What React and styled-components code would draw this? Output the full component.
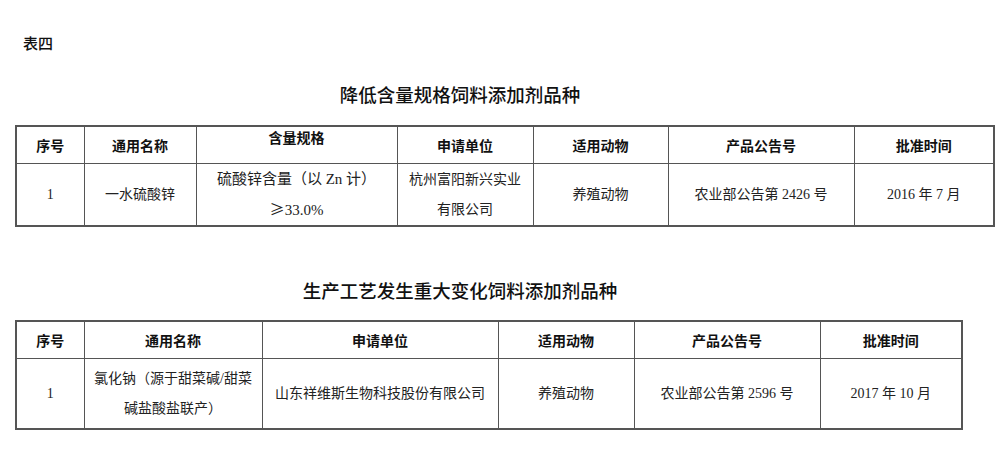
import React from 'react';
import styled, { createGlobalStyle } from 'styled-components';

const GlobalStyle = createGlobalStyle`
  html, body {
    margin: 0;
    background: #fff;
  }
  body {
    font-family: "Liberation Serif", "Noto Sans CJK SC", serif;
    color: #111;
  }
`;

const Page = styled.div`
  width: 1005px;
  height: 450px;
  padding: 33px 0 0 15px;
  box-sizing: border-box;
  overflow: hidden;
`;

const Label = styled.div`
  font-family: "Noto Sans CJK SC", sans-serif;
  font-size: 15px;
  font-weight: 500;
  line-height: 20px;
  padding-left: 8px;
`;

const Title = styled.h2`
  width: 890px;
  margin: ${(p) => p.$top}px 0 0;
  font-family: "Noto Sans CJK SC", sans-serif;
  font-size: 18.5px;
  font-weight: 500;
  line-height: 24px;
  text-align: center;
`;

const Table = styled.table`
  margin-top: ${(p) => p.$top}px;
  border-collapse: collapse;
  table-layout: fixed;
  width: ${(p) => p.$width}px;
  border: 2px solid #555;
`;

const Head = styled.th`
  height: 36px;
  padding: 0;
  border: 1.5px solid #555;
  font-family: "Noto Sans CJK SC", sans-serif;
  font-size: 14px;
  font-weight: 700;
  text-align: center;
  vertical-align: ${(p) => (p.$top ? 'top' : 'middle')};
  line-height: 20px;
`;

const Cell = styled.td`
  height: ${(p) => p.$height}px;
  padding: 0 4px;
  border: 1.5px solid #555;
  font-size: ${(p) => p.$size || 14}px;
  line-height: 30px;
  text-align: center;
  vertical-align: middle;
  color: #222;
`;

const Sym = styled.span`
  font-family: "Noto Sans CJK SC", sans-serif;
`;

const tables = [
  {
    title: '降低含量规格饲料添加剂品种',
    titleTop: 29,
    tableTop: 19,
    widths: [68, 112, 201, 136, 135, 186, 140],
    bodyHeight: 59,
    heads: ['序号', '通用名称', '含量规格', '申请单位', '适用动物', '产品公告号', '批准时间'],
    topHead: 2,
    cells: [
      '1',
      '一水硫酸锌',
      <>硫酸锌含量（以 Zn 计）<br /><Sym>≥</Sym>33.0%</>,
      <>杭州富阳新兴实业<br />有限公司</>,
      '养殖动物',
      '农业部公告第 2426 号',
      '2016 年 7 月',
    ],
    bigCell: 2,
  },
  {
    title: '生产工艺发生重大变化饲料添加剂品种',
    titleTop: 51,
    tableTop: 18,
    widths: [68, 178, 236, 136, 186, 142],
    bodyHeight: 69,
    heads: ['序号', '通用名称', '申请单位', '适用动物', '产品公告号', '批准时间'],
    cells: [
      '1',
      <>氯化钠（源于甜菜碱/甜菜<br />碱盐酸盐联产）</>,
      '山东祥维斯生物科技股份有限公司',
      '养殖动物',
      '农业部公告第 2596 号',
      '2017 年 10 月',
    ],
  },
];

export default function App() {
  return (
    <Page>
      <GlobalStyle />
      <Label>表四</Label>
      {tables.map((t) => (
        <React.Fragment key={t.title}>
          <Title $top={t.titleTop}>{t.title}</Title>
          <Table $top={t.tableTop} $width={t.widths.reduce((a, b) => a + b, 0)}>
            <colgroup>
              {t.widths.map((w, i) => (
                <col key={i} style={{ width: w }} />
              ))}
            </colgroup>
            <thead>
              <tr>
                {t.heads.map((h, i) => (
                  <Head key={h} $top={i === t.topHead}>{h}</Head>
                ))}
              </tr>
            </thead>
            <tbody>
              <tr>
                {t.cells.map((c, i) => (
                  <Cell key={i} $height={t.bodyHeight} $size={i === t.bigCell ? 15 : 14}>
                    {c}
                  </Cell>
                ))}
              </tr>
            </tbody>
          </Table>
        </React.Fragment>
      ))}
    </Page>
  );
}
